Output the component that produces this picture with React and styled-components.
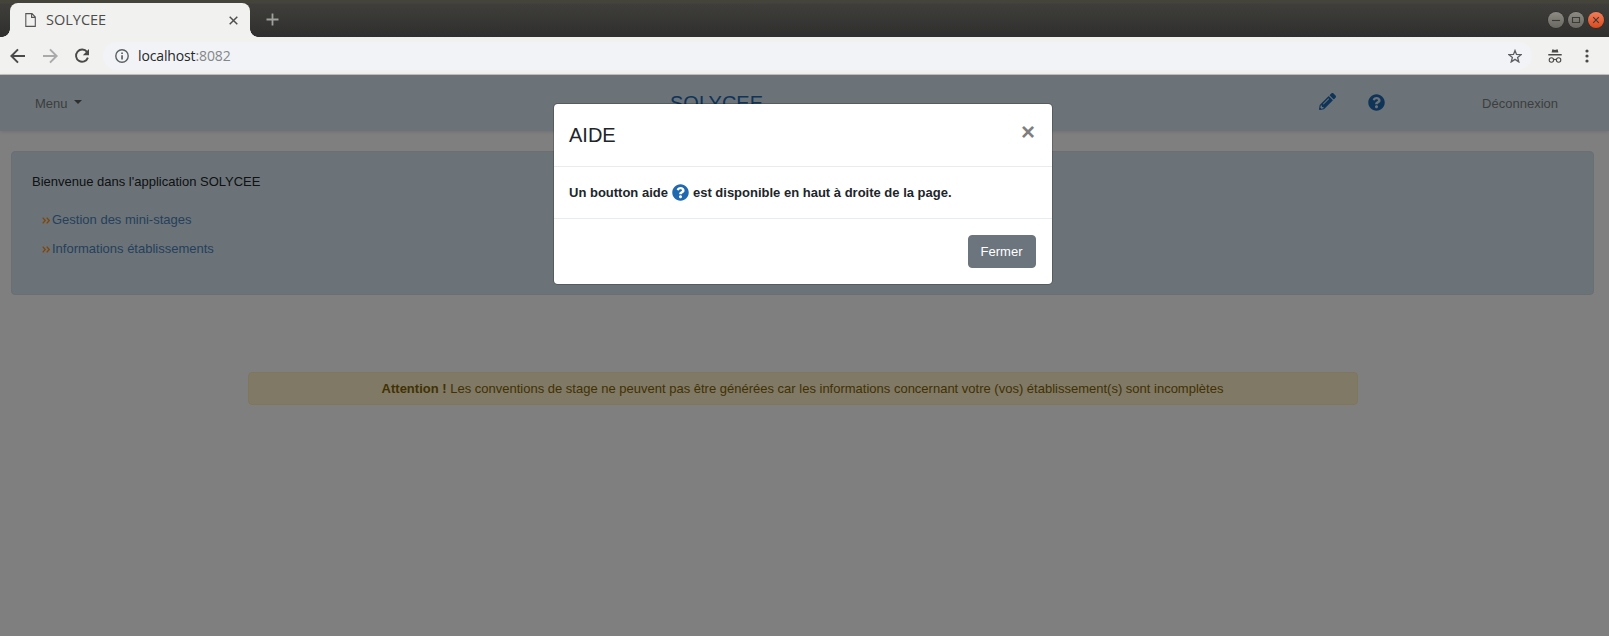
import React from "react";
import styled, { createGlobalStyle } from "styled-components";
import { FaPencilAlt, FaQuestionCircle } from "react-icons/fa";

const GlobalStyle = createGlobalStyle`
  *, *::before, *::after { box-sizing: border-box; }
  body {
    margin: 0;
    background: #fff;
    color: #212529;
    font: 13px/1.5 "Liberation Sans", Arial, sans-serif;
    overflow: hidden;
  }
  a { text-decoration: none; }
  button { font: inherit; }
  svg { display: block; flex: none; }
`;

const Window = styled.div`
  display: flex;
  flex-direction: column;
  height: 636px;
`;

const TitleBar = styled.div`
  display: flex;
  height: 37px;
  flex: none;
  padding: 3px 5px 0 2px;
  background: linear-gradient(#45443b 0, #45443b 3px, #3f3e3b 4px, #2f2f2d 37px);
`;

const Tab = styled.div`
  position: relative;
  display: flex;
  align-items: center;
  width: 240px;
  height: 34px;
  margin-left: 8px;
  padding: 0 12px 0 15px;
  border-radius: 8px 8px 0 0;
  background: #f1f1ef;
  color: #4c4c4c;
  font: 14.5px "Open Sans", "Noto Sans", sans-serif;
  &::before, &::after {
    content: "";
    position: absolute;
    bottom: 0;
    width: 8px;
    height: 8px;
  }
  &::before {
    left: -8px;
    background: radial-gradient(circle at 0 0, transparent 7.5px, #f1f1ef 8px);
  }
  &::after {
    right: -8px;
    background: radial-gradient(circle at 100% 0, transparent 7.5px, #f1f1ef 8px);
  }
`;

const TabTitle = styled.span`
  flex: 1;
  margin: -1px 0 0 10px;
`;

const NewTab = styled.div`
  margin: 10px 0 0 16px;
`;

const WindowButtons = styled.div`
  display: flex;
  gap: 4px;
  margin: 9px 0 0 auto;
`;

const RoundButton = styled.div`
  width: 16px;
  height: 16px;
  border-radius: 50%;
  background: ${(p) =>
    p.$close ? "linear-gradient(#f17c59, #dc4a1d)" : "linear-gradient(#8d8b82, #696861)"};
  box-shadow: 0 0 0 0.5px #2a2a28;
`;

const AddressBar = styled.div`
  display: flex;
  align-items: center;
  height: 38px;
  flex: none;
  padding: 0 20px 0 10px;
  border-bottom: 1px solid #c4c3c1;
  background: #f1f1ef;
`;

const NavIcons = styled.div`
  display: flex;
  gap: 16px;
`;

const Omnibox = styled.div`
  display: flex;
  align-items: center;
  flex: 1;
  height: 28px;
  margin: 0 16px 0 13px;
  padding: 0 10px 0 12px;
  border-radius: 14px;
  background: #f1f3f6;
`;

const Address = styled.span`
  flex: 1;
  margin: -1px 0 0 9px;
  color: #26272a;
  font: 14px "Open Sans", "Noto Sans", sans-serif;
  letter-spacing: -0.13px;
  span { color: #84868a; }
`;

const MenuDots = styled.div`
  margin-left: 23px;
`;

const Page = styled.main`
  position: relative;
  flex: 1;
`;

const NavBar = styled.nav`
  display: flex;
  align-items: center;
  height: 56px;
  padding: 0 51px 0 35px;
  background: #d6e7f0;
  box-shadow: 0 1px 4px rgba(0, 0, 0, 0.12);
  color: #7c7c7c;
`;

const MenuToggle = styled.a`
  display: flex;
  width: 635px;
  padding-top: 1px;
  &::after {
    content: "";
    margin: 6px 0 0 6px;
    height: 0;
    border: 4px solid transparent;
    border-top-color: #5c5c5c;
    border-bottom: 0;
  }
`;

const Brand = styled.a`
  width: 649px;
  color: #2068b0;
  font-size: 20px;
`;

const Tools = styled.div`
  display: flex;
  gap: 32px;
  flex: 1;
  margin-top: -1px;
  color: #2068b0;
  font-size: 17px;
  svg:first-child { margin-top: -1px; }
`;

const Logout = styled.a`
  padding-top: 1px;
`;

const Welcome = styled.section`
  height: 144px;
  margin: 20px 15px 0 11px;
  padding: 20px 20px;
  border: 1px solid #d4dee4;
  border-radius: 4px;
  background: #d6e7f0;
`;

const Greeting = styled.p`
  margin: 0;
`;

const Links = styled.ul`
  margin: 14px 0 0 10px;
  padding: 0;
  list-style: none;
`;

const LinkItem = styled.li`
  display: flex;
  align-items: center;
  height: 29px;
  a { margin-left: 2px; color: #4c7fb8; }
`;

const Alert = styled.div`
  width: 1110px;
  height: 33px;
  margin: 77px 0 0 248px;
  padding: 6px 13px 6px 12px;
  border: 1px solid #ffeeba;
  border-radius: 4px;
  background: #fff3cd;
  color: #856404;
  text-align: center;
`;

const Backdrop = styled.div`
  position: absolute;
  inset: 0;
  padding-top: 28px;
  background: rgba(0, 0, 0, 0.5);
`;

const Dialog = styled.div`
  width: 500px;
  margin-left: 553px;
  border: 1px solid rgba(0, 0, 0, 0.2);
  border-radius: 4.8px;
  background: #fff;
  background-clip: padding-box;
`;

const DialogHeader = styled.header`
  display: flex;
  justify-content: space-between;
  align-items: flex-start;
  padding: 16px 17px 16px 15px;
  border-bottom: 1px solid #e9ecef;
  h5 { margin: 0; font-size: 20px; font-weight: 400; line-height: 30px; }
`;

const CloseButton = styled.button`
  padding: 0;
  border: 0;
  background: none;
  color: #000;
  font-size: 24px;
  font-weight: 700;
  line-height: 1;
  opacity: 0.5;
`;

const DialogBody = styled.div`
  display: flex;
  align-items: center;
  height: 51px;
  padding: 0 15px;
  font-weight: 700;
  svg { margin: 0 4px 0 4px; color: #2068b0; font-size: 17px; }
`;

const DialogFooter = styled.footer`
  display: flex;
  justify-content: flex-end;
  padding: 16px;
  border-top: 1px solid #e9ecef;
`;

const Button = styled.button`
  height: 33px;
  padding: 0 12.5px 0 11.5px;
  border: 1px solid #6c757d;
  border-radius: 4px;
  background: #6c757d;
  color: #fff;
`;

const PageIcon = () => (
  <svg width="11" height="14" viewBox="0 0 11 14" fill="none" stroke="#555" strokeWidth="1.1">
    <path d="M.8.6H7L10.3 4v9.4H.8zM6.6.6v3.8h3.7" />
  </svg>
);

const Cross = () => (
  <svg width="9" height="9" viewBox="0 0 9 9" stroke="#505050" strokeWidth="1.5">
    <path d="M.7.7l7.6 7.6M8.3.7L.7 8.3" />
  </svg>
);

const Plus = () => (
  <svg width="13" height="13" viewBox="0 0 13 13" stroke="#a0a09d" strokeWidth="1.8">
    <path d="M6.5.5v12M.5 6.5h12" />
  </svg>
);

const WindowGlyph = ({ d }) => (
  <svg width="16" height="16" viewBox="0 0 16 16" fill="none" stroke="#3b3a36" strokeWidth="1.1">
    <path d={d} />
  </svg>
);

const Arrow = ({ forward }) => (
  <svg
    width="16" height="16" viewBox="0 0 16 16" fill="none"
    stroke={forward ? "#aaa" : "#4a4a4a"} strokeWidth="2"
  >
    <path d={forward ? "M1 8h13M8 1.4L14.6 8 8 14.6" : "M15 8H2M8 1.4L1.4 8 8 14.6"} />
  </svg>
);

const Reload = () => (
  <svg width="16" height="16" viewBox="0 0 16 16">
    <path d="M13 3.9A6.1 6.1 0 1 0 13.9 9.6" fill="none" stroke="#4a4a4a" strokeWidth="1.9" />
    <path d="M15 1v6.2H8.8z" fill="#4a4a4a" />
  </svg>
);

const Info = () => (
  <svg width="14" height="14" viewBox="0 0 14 14">
    <circle cx="7" cy="7" r="6.2" fill="none" stroke="#5c5f64" strokeWidth="1.4" />
    <path d="M6.2 6.2h1.7v4.3H6.2zM6.2 3.4h1.7V5H6.2z" fill="#5c5f64" />
  </svg>
);

const Star = () => (
  <svg width="14" height="14" viewBox="0 0 14 14" fill="none" stroke="#5c5f64" strokeWidth="1.3">
    <path d="M7 1.5l1.5 3.9 4.6.3-3.5 2.8 1.2 4.4L7 10.4l-3.8 2.5 1.2-4.4L.9 5.7l4.6-.3z" />
  </svg>
);

const Incognito = () => (
  <svg width="14" height="14" viewBox="0 0 14 14">
    <path d="M4.4.2L7 1 9.6.2l.8 3.4H3.6zM.3 5h13.4v1.4H.3z" fill="#4a4a4a" />
    <g fill="none" stroke="#4a4a4a" strokeWidth="1.1">
      <circle cx="3.4" cy="11" r="2.2" />
      <circle cx="10.6" cy="11" r="2.2" />
      <path d="M5.6 10.8q1.4-.8 2.8 0" />
    </g>
  </svg>
);

const Dots = () => (
  <svg width="4" height="14" viewBox="0 0 4 14" fill="#4a4a4a">
    <circle cx="2" cy="2" r="1.6" />
    <circle cx="2" cy="7" r="1.6" />
    <circle cx="2" cy="12" r="1.6" />
  </svg>
);

const DoubleChevron = () => (
  <svg width="8" height="7" viewBox="0 0 8 7" fill="none" stroke="#ff8c10" strokeWidth="1.4">
    <path d="M.7.6l2.5 2.9L.7 6.4M4.7.6l2.5 2.9-2.5 2.9" />
  </svg>
);

export default function App() {
  return (
    <Window>
      <GlobalStyle />
      <TitleBar>
        <Tab>
          <PageIcon />
          <TabTitle>SOLYCEE</TabTitle>
          <Cross />
        </Tab>
        <NewTab><Plus /></NewTab>
        <WindowButtons>
          <RoundButton><WindowGlyph d="M4 8.5h8" /></RoundButton>
          <RoundButton><WindowGlyph d="M4.5 5.5h7v5h-7z" /></RoundButton>
          <RoundButton $close><WindowGlyph d="M5.2 5.2l5.6 5.6M10.8 5.2l-5.6 5.6" /></RoundButton>
        </WindowButtons>
      </TitleBar>
      <AddressBar>
        <NavIcons>
          <Arrow />
          <Arrow forward />
          <Reload />
        </NavIcons>
        <Omnibox>
          <Info />
          <Address>localhost<span>:8082</span></Address>
          <Star />
        </Omnibox>
        <Incognito />
        <MenuDots><Dots /></MenuDots>
      </AddressBar>
      <Page>
        <NavBar>
          <MenuToggle>Menu</MenuToggle>
          <Brand>SOLYCEE</Brand>
          <Tools>
            <FaPencilAlt />
            <FaQuestionCircle />
          </Tools>
          <Logout>Déconnexion</Logout>
        </NavBar>
        <Welcome>
          <Greeting>Bienvenue dans l'application SOLYCEE</Greeting>
          <Links>
            <LinkItem><DoubleChevron /><a>Gestion des mini-stages</a></LinkItem>
            <LinkItem><DoubleChevron /><a>Informations établissements</a></LinkItem>
          </Links>
        </Welcome>
        <Alert>
          <strong>Attention !</strong> Les conventions de stage ne peuvent pas être générées car les
          informations concernant votre (vos) établissement(s) sont incomplètes
        </Alert>
        <Backdrop>
          <Dialog>
            <DialogHeader>
              <h5>AIDE</h5>
              <CloseButton>×</CloseButton>
            </DialogHeader>
            <DialogBody>
              <span>Un boutton aide</span>
              <FaQuestionCircle />
              <span>est disponible en haut à droite de la page.</span>
            </DialogBody>
            <DialogFooter>
              <Button>Fermer</Button>
            </DialogFooter>
          </Dialog>
        </Backdrop>
      </Page>
    </Window>
  );
}
